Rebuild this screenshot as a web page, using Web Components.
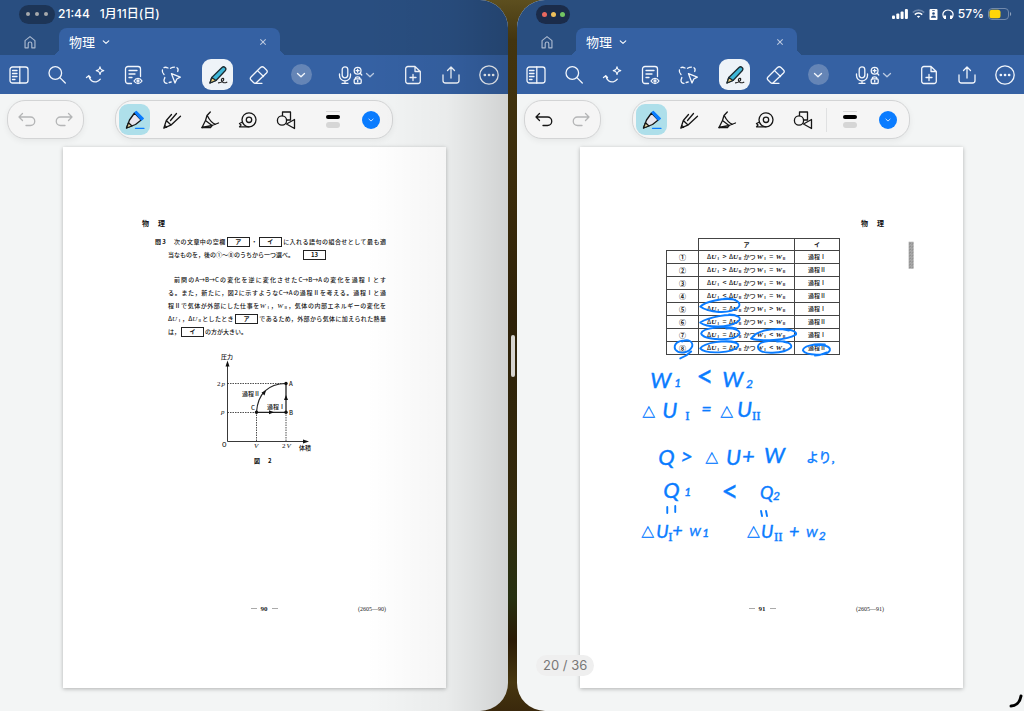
<!DOCTYPE html>
<html lang="ja">
<head>
<meta charset="utf-8">
<meta name="viewport" content="width=device-width, initial-scale=1">
<title>物理</title>
<style>
  html, body { margin: 0; }
  body { font-family: Inter, "Noto Sans CJK JP", sans-serif; color: #111; background: #3a2b0b; }
</style>
</head>
<body>
<split-screen>
  <note-window side="left">
    <window-status slot="status" time="21:44" date="1月11日(日)"></window-status>
    <tab-strip slot="tabs">物理</tab-strip>
    <main-toolbar slot="tools"></main-toolbar>
    <pen-toolbar slot="pens"></pen-toolbar>
    <paper-sheet side="left" number="90" code="(2605—90)">
      <question-text></question-text>
      <pv-graph></pv-graph>
    </paper-sheet>
  </note-window>
  <note-window side="right">
    <window-status slot="status" active></window-status>
    <tab-strip slot="tabs">物理</tab-strip>
    <main-toolbar slot="tools"></main-toolbar>
    <pen-toolbar slot="pens" can-undo></pen-toolbar>
    <paper-sheet side="right" number="91" code="(2605—91)">
      <answer-table></answer-table>
      <ink-layer slot="ink"></ink-layer>
    </paper-sheet>
    <page-count slot="badge">20 / 36</page-count>
  </note-window>
</split-screen>

<script>
const ICONS = {
  home: '<path d="M4.500 16.500V8.500L10 4l5.500 4.500v8h-3.500v-4.500a2 2 0 0 0-4 0v4.500z"/>',
  sidebar: '<rect x="1" y="2" width="18" height="16" rx="2.500"/><path d="M10.800 2v16M3.500 5.500h4.500M3.500 8.500h4.500M3.500 11.500h4.500M3.500 14.500h2.500"/>',
  search: '<circle cx="8.300" cy="8" r="6.300"/><path d="M12.900 12.600 18.300 18"/>',
  magic: '<path d="M1.500 12.500 3.800 10.800M3.800 10.800c.8 4.400 4 6.700 7.500 6 2-.4 3.200-1.400 4-2.600M3.800 10.800l1.700 1.700"/><path d="M15 1.800c.5 2.600 1 3.200 3.700 3.800-2.700.6-3.200 1.200-3.700 3.800-.5-2.600-1-3.200-3.700-3.800 2.700-.6 3.200-1.200 3.700-3.800z"/>',
  docview: '<path d="M8.500 18.500H5A2.500 2.500 0 0 1 2.500 16V4A2.500 2.500 0 0 1 5 1.500h10A2.500 2.500 0 0 1 17.500 4v7.500M6 5.500h8M6 9h6M6 12.500h3"/><path d="M11 16c2-3.400 6-3.400 8 0-2 3.400-6 3.400-8 0z"/><circle cx="15" cy="16" r="1"/>',
  lasso: '<path d="M6 18.300c-2 0-3-1-3-3 0-1.200.8-1.600.8-2.800M3 9.500C1.500 8 1 6.500 1.400 5M3 2.600c1.300-.8 2.500-.3 4 .4M9.500 3.300c1.300-.8 2.700-1.200 4-1.200M16 2.700c1.700 1 1.300 2.300.7 3.800M8.200 17.500l2-.5"/><path d="m10.500 8.700 8.800 3.500-3.500 1.800-1.800 4z"/>',
  brush: '<path d="M2 18l1.800-5.500L14 2.500c2-1.800 5 .6 3.400 3L8 15.500z" fill="#3fb7d8" stroke="#1c2a30"/><path d="M2 18l1.800-5.500L8 15.500z" fill="#f0d27c" stroke="#1c2a30"/><path d="M10.500 17.800c3.500-.3 5.500-2.300 5.200-3.800-.5-1.400-2.600-.2-2.300 1.500.3 2 2.700 2.900 5.400 1.700" stroke="#222" stroke-width="1.200"/>',
  eraser: '<path d="M11.500 2.500 2 12c-1 1-1 2 0 3l2.500 2.500c1 1 2 1 3 0L17.500 8c1-1 1-2 0-3L15 2.500c-1-1-2.500-1-3.500 0zM8.500 5.600l6 5.900M6 18.300h7"/>',
  chevron: '<path d="m6.500 8.500 3.500 3.300 3.500-3.300"/>',
  mic: '<rect x="7.200" y="1.800" width="5.600" height="11" rx="2.800"/><path d="M4.500 9v1.500a5.500 5.500 0 0 0 11 0V9M10 16v2.300M7 18.300h6"/>',
  pair: '<circle cx="9.600" cy="5.700" r="3.400"/><path d="M12.200 8.200 13.800 10M9.600 4.200v3M8.100 5.700h3"/><path d="M7.500 13.800c-1-2.700 5.200-2.700 4.200 0"/><rect x="6.200" y="13.800" width="7" height="4.700" rx="1.200"/><path d="M9.700 15.400v1.500"/>',
  adddoc: '<path d="M12 1.500H5A2.300 2.300 0 0 0 2.700 4v12A2.300 2.300 0 0 0 5 18.500h10a2.300 2.300 0 0 0 2.300-2.500V6.500zM12 1.500v5h5.300M10 9.500v6M7 12.500h6"/>',
  share: '<path d="M10 13V2.500M6.500 5.500 10 2l3.500 3.500M2 10v5.500A2.500 2.500 0 0 0 4.500 18h11a2.500 2.500 0 0 0 2.500-2.500V10"/>',
  more: '<circle cx="10" cy="10" r="9.200"/><path d="M5.800 10h.1M10 10h.1M14.100 10h.1" stroke-width="2.600"/>',
  undo: '<path d="M5.500 3.500 2 7l3.500 3.500M2 7h11.500a4 4 0 0 1 0 8.500H9"/>',
  redo: '<path d="M14.500 3.500 18 7l-3.500 3.500M18 7H6.500a4 4 0 0 0 0 8.500H11"/>',
  fountain: '<path d="M1.500 18 4.500 10 9.500 3l6.700 7-5.700 4.500z" fill="#e8e6ee"/><path d="M10 2.500 11.300 1.500 18.300 8.500 16.500 10z" fill="#0a7cff" stroke="#0a7cff"/><path d="M1.500 18 3.500 12.800 7 16z" fill="#ead9a0"/><path d="M10.500 18.300h8.500" stroke="#0a7cff"/>',
  ballpen: '<path d="M1.800 18.200 4.300 10.500 9.500 4.500M1.800 18.200l7-3 9.700-9M4.300 10.500 9 15M8.500 10.500 14.500 3.500M2.800 15.500l2 1.700"/>',
  marker: '<path d="M10.300 2 7 5.500l-1.500 5M2 17.500 5.500 10.500l6.500 5zM12 15.500l6.500-2.500M7.500 6c2 4 4 7 8 8.300"/><path d="M2 17.500h8.500l1.500-2"/>',
  tape: '<circle cx="11" cy="9.800" r="7"/><circle cx="11" cy="9.800" r="2.700"/><path d="M11 16.800H1.500L3 15l-1.500-1.500L4.500 12"/>',
  shapes: '<circle cx="6" cy="10.500" r="4.600"/><path d="M6.500 5.500V2h8v8h-4M18.500 9.500v9l-8-4.500z"/>',
  close: '<path d="m7 7 6 6M13 7l-6 6"/>'
};

function define(name, html, setup) {
  const tpl = document.createElement('template');
  tpl.innerHTML = html;
  customElements.define(name, class extends HTMLElement {
    constructor() {
      super();
      this.attachShadow({ mode: 'open' }).append(tpl.content.cloneNode(true));
    }
    connectedCallback() { if (setup) setup(this, this.shadowRoot); }
  });
}

define('ui-icon', `<style>
  :host { display: block; width: 20px; height: 20px; flex: none; }
  svg { display: block; width: 100%; height: 100%; fill: none; stroke: currentColor; stroke-width: 1.3; stroke-linecap: round; stroke-linejoin: round; }
</style><svg viewBox="0 0 20 20" aria-hidden="true"></svg>`, (el, root) => {
  root.querySelector('svg').innerHTML = ICONS[el.getAttribute('name')] || '';
});

define('split-screen', `<style>
  :host { display: grid; grid-template-columns: minmax(0, 508fr) 9px minmax(0, 507fr); min-height: 100vh; overflow: hidden;
    background: linear-gradient(#5d4f1f 0, #43350f 40px, #38290a 30%, #2d2108 45%, #33290c 70%, #263011 84%, #2a1b05 90%, #47370f 96%, #3a280c 100%); }
  .grip { grid-column: 2; grid-row: 1; align-self: center; justify-self: center; width: 4px; height: 42px; border-radius: 2px; background: #d6d4cf; }
  ::slotted([side="left"]) { grid-column: 1; grid-row: 1; }
  ::slotted([side="right"]) { grid-column: 3; grid-row: 1; }
</style><slot></slot><div class="grip" role="separator" aria-label="分割"></div>`);

define('note-window', `<style>
  :host { display: flex; flex-direction: column; position: relative; min-width: 0; overflow: hidden; background: #f3f5f5; }
  :host([side="left"]) { border-radius: 0 28px 28px 0; }
  :host([side="right"]) { border-radius: 28px 0 0 28px; }
  header { background: #294e80; }
  main { flex: 1; display: flex; flex-direction: column; gap: 8px; padding: 6px 0 22px; }
  .page { padding: 0 61px 0 63px; }
  :host([side="left"]) .page { padding-right: 62px; }
  .shade { display: none; position: absolute; inset: 0; pointer-events: none; background: linear-gradient(90deg, rgba(0,0,0,0) 72%, rgba(0,0,0,.04) 88%, rgba(0,0,0,.14)); }
  :host([side="left"]) .shade { display: block; }
  .corner { display: none; position: absolute; right: 0; bottom: 2px; width: 16px; height: 16px; fill: none; stroke: #000; stroke-width: 3; stroke-linecap: round; }
  :host([side="right"]) .corner { display: block; }
</style>
<header><slot name="status"></slot><slot name="tabs"></slot><slot name="tools"></slot></header>
<main><slot name="pens"></slot><div class="page"><slot></slot></div></main>
<slot name="badge"></slot>
<div class="shade"></div>
<svg class="corner" viewBox="0 0 16 16"><path d="M3 13c5 0 9-4 10-10"/></svg>`);

define('window-status', `<style>
  :host { display: flex; align-items: center; height: 28px; padding: 0 12px 0 19px; color: #fff; font-size: 12px; line-height: 16px; font-weight: 500; }
  .dots { display: flex; align-items: center; justify-content: center; gap: 5px; width: 36px; height: 19px; padding: 0; border: 0; border-radius: 10px; background: #1d3557; margin-right: 3px; }
  .dots i { width: 4px; height: 4px; border-radius: 50%; background: #a7a9ac; }
  :host([active]) .dots i { width: 5px; height: 5px; }
  :host([active]) .dots { gap: 4px; width: 34px; background: #1b2c4a; }
  :host([active]) i:nth-child(1) { background: #e8695f; }
  :host([active]) i:nth-child(2) { background: #efc05a; }
  :host([active]) i:nth-child(3) { background: #73c562; }
  .date { margin-left: 10px; }
  .system { display: none; margin-left: auto; align-items: center; gap: 4px; }
  :host([active]) .system { display: flex; }
  svg { display: block; }
</style>
<button class="dots" aria-label="マルチタスク"><i></i><i></i><i></i></button>
<span class="time"></span><span class="date"></span>
<div class="system">
  <svg width="16" height="10" viewBox="0 0 16 10" fill="#fff"><rect y="6.500" width="3" height="3.500" rx="1"/><rect x="4.300" y="4.500" width="3" height="5.500" rx="1"/><rect x="8.600" y="2.500" width="3" height="7.500" rx="1"/><rect x="12.900" width="3" height="10" rx="1"/></svg>
  <svg width="13" height="10" viewBox="0 0 13 10" fill="none" stroke="#fff" stroke-width="1.600"><path d="M.8 3.500c3.200-3.200 8.200-3.200 11.400 0" stroke="#6d87ab"/><path d="M2.800 5.600c2.100-2 5.300-2 7.400 0"/><path d="M4.800 7.300c1-.9 2.400-.9 3.400 0L6.500 9z" fill="#fff" stroke="none"/></svg>
  <svg width="9" height="11" viewBox="0 0 9 11"><rect x=".5" width="8" height="11" rx="1" fill="#fff"/><circle cx="4.500" cy="4.500" r="1.300" fill="#294e80"/><path d="M2 8.700c0-3 5-3 5 0zM3.200 1h2.600v.8H3.200z" fill="#294e80"/></svg>
  <svg width="12" height="11" viewBox="0 0 12 11" fill="none" stroke="#fff" stroke-width="1.200"><path d="M2 9C-.8 4 2.500 1 6 1s6.800 3 4 8"/><path d="M3 6.500v3.500M9 6.500v3.500" stroke-width="2"/></svg>
  <span>57%</span>
  <svg width="24" height="12" viewBox="0 0 24 12"><rect x=".5" y=".5" width="20" height="11" rx="3.500" fill="none" stroke="#7189ac"/><rect x="1.500" y="1.800" width="11" height="8.400" rx="2.500" fill="#ffd60a"/><path d="M22 4v4c1.600-.6 1.600-3.400 0-4z" fill="#8da1bd"/></svg>
</div>`, (el, root) => {
  root.querySelector('.time').textContent = el.getAttribute('time') || '';
  root.querySelector('.date').textContent = el.getAttribute('date') || '';
});

define('tab-strip', `<style>
  :host { display: flex; height: 27px; color: #fff; }
  button { font: inherit; color: inherit; border: 0; padding: 0; background: none; display: flex; align-items: center; }
  .home { width: 59px; justify-content: center; color: #a9b8ce; }
  .home ui-icon { width: 18px; height: 18px; }
  .tab { position: relative; display: flex; align-items: center; width: 221px; padding: 0 9px 0 10px; box-sizing: border-box; border-radius: 8px 8px 0 0; background: #3561a3; }
  .tab::before, .tab::after { content: ""; position: absolute; bottom: 0; width: 7px; height: 7px; }
  .tab::before { right: 100%; background: radial-gradient(circle at 0 0, transparent 7px, #3561a3 7px); }
  .tab::after { left: 100%; background: radial-gradient(circle at 100% 0, transparent 7px, #3561a3 7px); }
  .name { gap: 3px; font-size: 13px; line-height: 20px; }
  .name ui-icon, .close ui-icon { width: 16px; height: 16px; }
  .close { margin-left: auto; color: #b8c6de; }
</style>
<button class="home" aria-label="ホーム"><ui-icon name="home"></ui-icon></button>
<div class="tab"><button class="name"><span><slot></slot></span><ui-icon name="chevron"></ui-icon></button>
<button class="close" aria-label="閉じる"><ui-icon name="close"></ui-icon></button></div>`);

define('main-toolbar', `<style>
  :host { display: flex; align-items: center; height: 39px; background: #3561a3; color: #f2f6fc; }
  .group { display: flex; align-items: center; }
  button { display: flex; align-items: center; justify-content: center; width: 38px; height: 31px; padding: 0; border: 0; background: none; color: inherit; }
  .draw { margin-left: 6px; }
  .draw button { width: 42px; }
  .draw button.on { width: 31px; margin: 0 5px 0 6px; border-radius: 9px; background: #eef3f8; }
  .round { display: flex; width: 21px; height: 21px; align-items: center; justify-content: center; border-radius: 50%; background: #6585b6; }
  .voice { margin-left: 11px; }
  .voice button { width: 48px; }
  .voice ui-icon { margin: 0 -2px; }
  .voice ui-icon + ui-icon { margin: 0 -3px 0 -5px; }
  .voice ui-icon:last-child { opacity: .7; }
  .file { margin-left: auto; }
</style>
<div class="group">
  <button aria-label="サイドバー"><ui-icon name="sidebar"></ui-icon></button>
  <button aria-label="検索"><ui-icon name="search"></ui-icon></button>
  <button aria-label="アシスト"><ui-icon name="magic"></ui-icon></button>
  <button aria-label="閲覧モード"><ui-icon name="docview"></ui-icon></button>
  <button aria-label="なげなわ"><ui-icon name="lasso"></ui-icon></button>
</div>
<div class="group draw">
  <button class="on" aria-label="ペン"><ui-icon name="brush"></ui-icon></button>
  <button aria-label="消しゴム"><ui-icon name="eraser"></ui-icon></button>
  <button aria-label="その他のツール"><span class="round"><ui-icon name="chevron"></ui-icon></span></button>
</div>
<div class="group voice"><button aria-label="録音"><ui-icon name="mic"></ui-icon><ui-icon name="pair"></ui-icon><ui-icon name="chevron"></ui-icon></button></div>
<div class="group file">
  <button aria-label="ページを追加"><ui-icon name="adddoc"></ui-icon></button>
  <button aria-label="共有"><ui-icon name="share"></ui-icon></button>
  <button aria-label="メニュー"><ui-icon name="more"></ui-icon></button>
</div>`);

define('pen-toolbar', `<style>
  :host { display: flex; gap: 31px; padding: 0 7px; color: #161616; }
  .box { display: flex; align-items: center; height: 37px; border: 1px solid #d3d4d5; border-radius: 18px; background: #f5f5f5; box-shadow: 0 2px 6px rgba(0,0,0,.06); }
  button { display: flex; align-items: center; justify-content: center; width: 38px; height: 31px; padding: 0; border: 0; background: none; color: inherit; }
  .history { width: 75px; }
  .history button { width: 50%; }
  .history button:disabled { color: #b4b5b6; }
  .pens { padding: 0 2px 0 3px; }
  .pens .on { width: 31px; margin-right: 3px; border-radius: 9px; background: #aedfea; }
  hr { width: 1px; height: 24px; margin: 0 4px; border: 0; background: transparent; }
  :host([can-undo]) hr { background: #e0e1e2; }
  .width { display: flex; flex-direction: column; align-items: center; gap: 3px; width: 14px; }
  .width i { width: 100%; height: 1px; background: #d9d9d9; }
  .width i:nth-child(2) { height: 4px; border-radius: 2px; background: #000; }
  .width i:nth-child(3) { height: 6px; border-radius: 3px; background: #d6d6d6; }
  .color { display: flex; align-items: center; justify-content: center; width: 18px; height: 18px; border-radius: 50%; background: #0a7cff; color: #fff; }
  .color ui-icon { width: 12px; height: 12px; }
</style>
<div class="box history">
  <button class="undo" aria-label="取り消す" disabled><ui-icon name="undo"></ui-icon></button>
  <button aria-label="やり直す" disabled><ui-icon name="redo"></ui-icon></button>
</div>
<div class="box pens">
  <button class="on" aria-label="万年筆"><ui-icon name="fountain"></ui-icon></button>
  <button aria-label="ボールペン"><ui-icon name="ballpen"></ui-icon></button>
  <button aria-label="筆ペン"><ui-icon name="marker"></ui-icon></button>
  <button aria-label="テープ"><ui-icon name="tape"></ui-icon></button>
  <button aria-label="図形"><ui-icon name="shapes"></ui-icon></button>
  <hr>
  <button aria-label="太さ"><span class="width"><i></i><i></i><i></i></span></button>
  <button aria-label="色"><span class="color"><ui-icon name="chevron"></ui-icon></span></button>
</div>`, (el, root) => {
  root.querySelector('.undo').disabled = !el.hasAttribute('can-undo');
});

define('paper-sheet', `<style>
  :host { display: flex; flex-direction: column; position: relative; box-sizing: border-box; aspect-ratio: 384 / 542; padding: 72px 60px 75px 79px;
    background: #fff; box-shadow: 0 1px 4px rgba(0,0,0,.28); font-size: 6px; line-height: 8px; font-family: "Noto Sans CJK JP", sans-serif; }
  :host([side="right"]) { padding: 72px 79px 75px 60px; }
  h1 { margin: 0; font-size: 7px; line-height: 8px; font-weight: 700; display: flex; gap: 9px; }
  :host([side="right"]) h1 { justify-content: flex-end; }
  footer { display: grid; grid-template-columns: 1fr auto 1fr; margin-top: auto; font-family: "Liberation Serif", serif; color: #222; }
  .num { grid-column: 2; display: flex; gap: 4px; align-items: center; font-size: 7px; }
  .num i { width: 6px; height: 1px; background: #aaa; }
  .code { justify-self: end; }
</style>
<h1><span>物</span><span>理</span></h1>
<slot></slot>
<footer><span class="num"><i></i><b></b><i></i></span><span class="code"></span></footer>
<slot name="ink"></slot>`, (el, root) => {
  root.querySelector('b').textContent = el.getAttribute('number');
  root.querySelector('.code').textContent = el.getAttribute('code');
});

define('question-text', `<style>
  :host { display: block; margin: 8px 0 0 13px; font-weight: 500; line-height: 13px; }
  section { display: flex; }
  .no { width: 13px; flex: none; white-space: nowrap; font-weight: 700; }
  p { flex: 1; margin: 0; white-space: nowrap; }
  .second { margin-top: 12px; padding-left: 13px; }
  span { display: block; height: 13px; text-align: justify; text-align-last: justify; white-space: normal; }
  .indent { padding-left: 6px; }
  .end { text-align-last: left; }
  b { display: inline-block; box-sizing: border-box; width: 23px; height: 10px; border: 1px solid #222; line-height: 8px; text-align: center; text-align-last: center; vertical-align: middle; font-weight: 700; margin: 0 1px; }
  .answer { margin-left: 9px; }
  i { font-family: "Liberation Serif", serif; font-size: 7px; line-height: 0; }
  sub { font-size: 4px; line-height: 0; vertical-align: -1px; }
</style>
<section><div class="no">問 3</div><p>
<span class="indent">次の文章中の空欄<b>ア</b>・<b>イ</b>に入れる語句の組合せとして最も適</span>
<span class="end">当なものを，後の①〜⑧のうちから一つ選べ。<b class="answer">13</b></span></p></section>
<p class="second">
<span class="indent">前問のA→B→Cの変化を逆に変化させたC→B→Aの変化を過程Ⅰとす</span>
<span>る。また，新たに，図2に示すようなC→Aの過程Ⅱを考える。過程Ⅰと過</span>
<span>程Ⅱで気体が外部にした仕事を<i>W</i><sub>Ⅰ</sub>，<i>W</i><sub>Ⅱ</sub>，気体の内部エネルギーの変化を</span>
<span>Δ<i>U</i><sub>Ⅰ</sub>，Δ<i>U</i><sub>Ⅱ</sub>としたとき<b>ア</b>であるため，外部から気体に加えられた熱量</span>
<span class="end">は，<b>イ</b>の方が大きい。</span></p>`);

define('pv-graph', `<style>
  :host { display: block; margin: 12px 0 0 73px; width: 106px; }
  svg { display: block; width: 106px; height: 118px; font-size: 6px; font-weight: 500; fill: #111; }
  .v { font-family: "Liberation Serif", serif; font-size: 7px; }
  .i { font-style: italic; }
</style>
<svg viewBox="0 0 106 118" role="img" aria-label="図2 圧力と体積">
  <g fill="none" stroke="#222"><path d="M12.500 15v76.500H89" stroke-width=".9"/><path d="M12.500 33.500H71M12.500 62.500H41M41.500 62v29M71 62v29" stroke-width=".8" stroke-dasharray="1.500 1"/><path d="M41.500 62.300H71V33.500" stroke-width="1.300"/><path d="M41.500 62C43 43 53 34 71 33.500" stroke-width="1.200"/></g>
  <path d="M12.500 10.500l-2 6h4zM94 91.500l-6-2v4zM71 45l-2 5h4zM59 62.300l-5-2v4zM51 40.500l-4.500 2 3 3z"/>
  <circle cx="41.500" cy="62.300" r="1.700"/><circle cx="71" cy="62.300" r="1.700"/><circle cx="71" cy="33.500" r="1.700"/>
  <text x="6" y="9">圧力</text><text x="84" y="100">体積</text>
  <text x="27" y="46">過程Ⅱ</text><text x="52" y="59">過程Ⅰ</text>
  <text x="74" y="36">A</text><text x="74" y="65">B</text><text x="36" y="60">C</text><text x="7" y="97">O</text>
  <text class="v" x="2" y="36">2<tspan class="i" dx="1">p</tspan></text><text class="v i" x="6" y="64">p</text>
  <text class="v i" x="39" y="98">V</text><text class="v" x="67" y="98">2<tspan class="i" dx="1">V</tspan></text>
  <text x="39" y="113" font-weight="700">図</text><text x="53" y="113" font-weight="700">2</text>
</svg>`);

define('answer-table', `<style>
  :host { display: block; margin: 11px 0 0 26px; }
  table { width: 174px; border-collapse: collapse; table-layout: fixed; font-weight: 500; line-height: 8px; color: #111; }
  tr { height: 13px; }
  thead tr { height: 12px; }
  th, td { padding: 0; border: 1px solid #444; text-align: center; vertical-align: middle; font-weight: 500; white-space: nowrap; }
  .blank { border-top-style: hidden; border-left-style: hidden; }
  thead th { font-weight: 700; }
  tbody th { font-size: 7px; font-weight: 700; }
  i { font-family: "Liberation Serif", serif; font-weight: 700; font-size: 7px; line-height: 0; }
  sub { font-size: 4px; line-height: 0; vertical-align: -1px; font-weight: 700; }
  u { text-decoration: none; margin: 0 1px; font-size: 7px; line-height: 0; }
</style>
<table><colgroup><col style="width:32px"><col style="width:96px"><col></colgroup>
<thead><tr><td class="blank"></td><th scope="col">ア</th><th scope="col">イ</th></tr></thead><tbody></tbody></table>`, (el, root) => {
  const rows = [['①','>','=','Ⅰ'],['②','>','=','Ⅱ'],['③','<','=','Ⅰ'],['④','<','=','Ⅱ'],['⑤','=','>','Ⅰ'],['⑥','=','>','Ⅱ'],['⑦','=','<','Ⅰ'],['⑧','=','<','Ⅱ']];
  const esc = s => s.replace('<', '&lt;').replace('>', '&gt;');
  root.querySelector('tbody').innerHTML = rows.map(([n, u, w, k]) =>
    `<tr><th scope="row">${n}</th><td>Δ<i>U</i><sub>Ⅰ</sub> <u>${esc(u)}</u> Δ<i>U</i><sub>Ⅱ</sub> かつ <i>W</i><sub>Ⅰ</sub> <u>${esc(w)}</u> <i>W</i><sub>Ⅱ</sub></td><td>過程${k}</td></tr>`).join('');
});

define('ink-layer', `<style>
  :host { display: block; position: absolute; inset: 0; pointer-events: none; }
  svg { display: block; width: 100%; height: 100%; }
  .pen { fill: none; stroke: #0a7cff; stroke-width: 1.9; stroke-linecap: round; stroke-linejoin: round; }
  text { fill: #0a7cff; stroke: #0a7cff; stroke-width: .4px; font-family: Lato, "Noto Sans CJK JP", sans-serif; font-style: italic; font-size: 22px; }
  .l { font-size: 30px; font-style: normal; }
  .m { font-size: 18px; }
  .s { font-size: 12px; }
  .r { font-family: "Liberation Serif", "Noto Sans CJK JP", serif; font-style: normal; font-size: 13px; }
</style>
<svg viewBox="0 0 383 542">
  <defs><pattern id="grain" width="3" height="3" patternUnits="userSpaceOnUse"><rect width="3" height="3" fill="#aaa"/><rect width="1" height="1" fill="#777"/><rect x="2" y="1" width="1" height="1" fill="#888"/></pattern></defs>
  <rect x="329" y="95" width="5" height="27" fill="url(#grain)"/>
  <g class="pen">
    <path d="M155 153c-12-2-30 2-35 7 8 6 29 8 38 1 5-5-4-10-14-9"/>
    <path d="M158 170c-8-4-30 1-38 6 6 5 28 6 38-1 5-4-2-7-9-7"/>
    <path d="M156 182c-10-3-34-1-35 5 2 7 33 8 38 1 3-4-7-7-13-6"/>
    <path d="M156 196c-10-3-32 0-36 6 5 6 33 5 38-2 2-4-7-5-12-5"/>
    <path d="M209 184c-14-3-32-1-38 8 9 3 37 2 45-4 2-4-12-7-22-5"/>
    <path d="M207 196c-14-4-30-1-29 5 1 8 27 6 33 0 2-4-6-7-14-6"/>
    <path d="M108 194c-11-1-15 4-13 9 4 5 14 4 17-3 1-5-4-8-10-5M111 205c-3 3-6 5-11 7"/>
    <path d="M245 198c-12-1-22 2-22 6 3 5 24 6 27 0 1-5-8-6-14-5M247 206c-4 2-8 3-12 3"/>
    <path d="M87 361v6M95 360v6M181 365l1 5M186 365l1 5"/>
  </g>
  <text x="70" y="242">W</text><text class="s" x="94" y="241">1</text><text class="l" x="116" y="241">&lt;</text><text x="142" y="241">W</text><text class="s" x="166" y="242">2</text>
  <text class="r" x="62" y="271">△</text><text x="82" y="272">U</text><text class="r" x="105" y="274">I</text><text class="m" x="121" y="269">=</text><text class="r" x="140" y="271">△</text><text x="157" y="271">U</text><text class="r" x="172" y="274">II</text>
  <text x="78" y="319">Q</text><text x="100" y="318">&gt;</text><text class="r" x="125" y="317">△</text><text x="146" y="319">U</text><text x="162" y="318">+</text><text x="184" y="317">W</text><text class="r" x="226" y="316">より,</text>
  <text x="83" y="352">Q</text><text class="s" x="104" y="350">1</text><text class="l" x="141" y="356">&lt;</text><text class="m" x="180" y="353">Q</text><text class="s" x="193" y="354">2</text>
  <text class="r" x="61" y="391">△</text><text class="m" x="76" y="392">U</text><text class="r" x="88" y="395">I</text><text class="m" x="92" y="390">+</text><text class="s" x="109" y="390">W</text><text class="s" x="122" y="391">1</text>
  <text class="r" x="167" y="391">△</text><text class="m" x="181" y="392">U</text><text class="r" x="194" y="395">II</text><text class="m" x="209" y="391">+</text><text class="s" x="226" y="391">W</text><text class="s" x="239" y="394">2</text>
</svg>`);

define('page-count', `<style>
  :host { position: absolute; left: 19px; bottom: 35px; padding: 0 7px; border-radius: 11px; background: #efefef; color: #777; font-size: 13px; line-height: 21px; }
</style><slot></slot>`);
</script>
</body>
</html>
